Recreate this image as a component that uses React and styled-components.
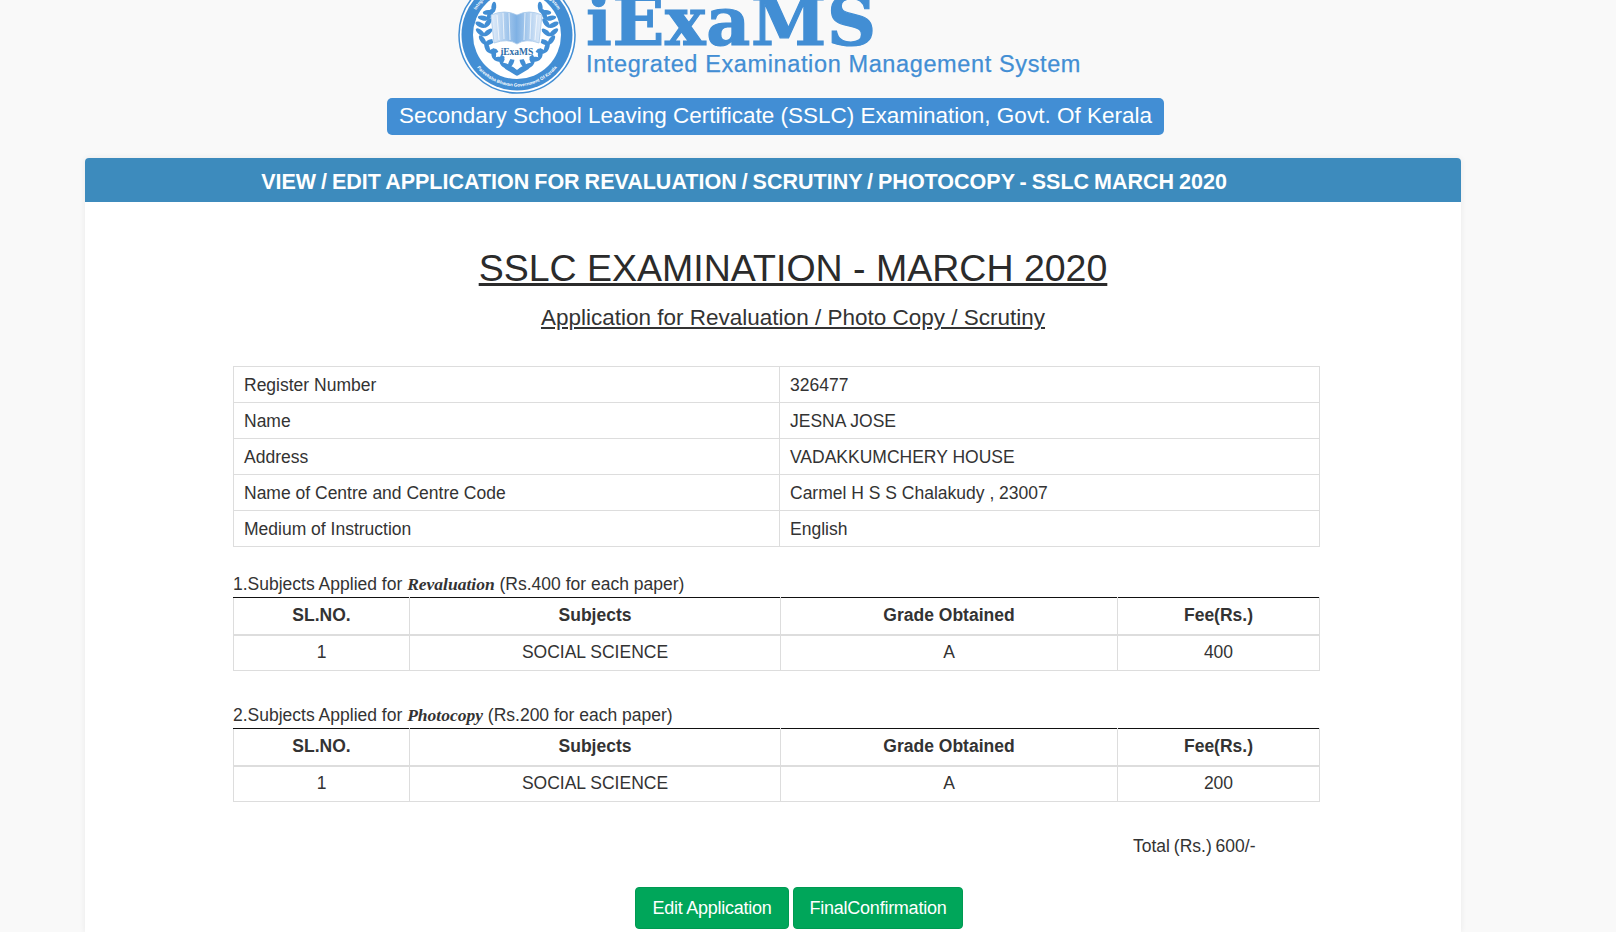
import React from "react";
import styled, { createGlobalStyle } from "styled-components";

const Global = createGlobalStyle`
  html, body { margin: 0; padding: 0; height: 932px; overflow: hidden; background: #f9f9f9; }
  body { font-family: "Liberation Sans", Arial, sans-serif; color: #333; font-size: 17.5px; }
  * { box-sizing: border-box; }
`;
const Page = styled.div`display: flex; flex-direction: column; height: 932px; overflow: hidden;`;
const Masthead = styled.header`display: flex; height: 94px; padding-left: 458px; gap: 10px; overflow: hidden; align-items: flex-end;`;
const LogoMark = styled.svg`width: 118px; height: 118px; flex: none; display: block;`;
const Brand = styled.div`display: flex; flex-direction: column; color: #428ed4;`;
const BrandName = styled.div`font-family: "DejaVu Serif", serif; font-weight: 700; font-size: 68px; line-height: 60px; height: 60px; margin-top: -13px; letter-spacing: .7px; -webkit-text-stroke: 1.2px #428ed4; white-space: nowrap;`;
const BrandSub = styled.div`font-size: 23.5px; line-height: 26px; letter-spacing: .62px; margin: 0 0 17px; -webkit-text-stroke: .25px #428ed4; white-space: nowrap;`;
const BadgeRow = styled.div`display: flex; padding: 4px 0 0 387px;`;
const Badge = styled.div`width: 777px; height: 37px; background: #428ed4; color: #fff; border-radius: 5px; font-size: 22.5px; line-height: 35px; text-align: center; white-space: nowrap;`;
const Card = styled.section`margin: 23px 155px 0 85px; background: #fff; flex: 1; border-radius: 4px 4px 0 0; box-shadow: 0 0 6px rgba(0,0,0,.07);`;
const CardHead = styled.div`height: 44px; background: #3d8bbd; border-radius: 4px 4px 0 0; color: #fff; font-weight: 700; font-size: 21.5px; line-height: 48px; word-spacing: -1px; text-align: center; padding-right: 58px; white-space: nowrap;`;
const CardBody = styled.div`padding: 0 142px 0 148px;`;
const Title = styled.h1`margin: 43px 0 0; font-weight: 400; font-size: 37.5px; line-height: 46px; text-align: center; text-decoration: underline; padding-left: 34px; color: #2b2b2b;`;
const Subtitle = styled.h2`margin: 13px 0 0; font-weight: 400; font-size: 22.5px; line-height: 28px; text-align: center; text-decoration: underline; padding-left: 34px; color: #333;`;
const Grid = styled.table`width: 1086px; border-collapse: collapse; table-layout: fixed; margin-top: ${p => p.$mt || 0}px; border-top: ${p => p.$rule ? "1px solid #111" : "0"};`;
const Cell = styled.td`border: 1px solid #ddd; height: 36px; padding: 0 10px; font-size: 17.5px; line-height: 24px; color: #333; text-align: left;`;
const DataCell = styled(Cell)`text-align: center; padding-bottom: 2px;`;
const Head = styled.th`border: 1px solid #ddd; border-top: 1px solid #111; border-bottom-width: 2px; height: 37px; padding: 0 10px; font-size: 17.5px; color: #333; text-align: center; font-weight: 700;`;
const Caption = styled.div`font-size: 17.5px; line-height: 24px; margin-top: ${p => p.$mt}px; height: 25px; color: #333;`;
const Accent = styled.em`font-family: "Liberation Serif", serif; font-weight: 700; font-style: italic; font-size: 17.5px;`;
const Total = styled.div`margin: 32px 0 0 900px; line-height: 24px; word-spacing: -1px;`;
const Actions = styled.div`display: flex; gap: 4px; margin: 29px 0 0 402px;`;
const Btn = styled.button`height: 42px; width: ${p => p.$w}px; background: #00a65a; color: #fff; border: 1px solid #009a52; border-radius: 4px; font: 18px "Liberation Sans", sans-serif; letter-spacing: -.25px; padding: 0;`;

const steps = Array.from({ length: 9 });
const Branch = ({ side }) => (
  <g>
    {steps.map((_, i) => {
      const deg = 14 + i * 15;
      const a = deg * Math.PI / 180;
      const r = 33;
      const x = 59 + side * r * Math.sin(a), y = 59 + r * Math.cos(a);
      const tilt = side * (90 - deg);
      return (
        <g key={i} transform={`translate(${x} ${y})`}>
          <ellipse cx={side * 5} cy="0" rx="5.5" ry="2.4" fill="#428ed4" transform={`rotate(${-tilt - side * 40})`} />
          <ellipse cx={-side * 5} cy="0" rx="5.5" ry="2.4" fill="#428ed4" transform={`rotate(${-tilt + side * 40})`} />
        </g>
      );
    })}
  </g>
);
const Logo = () => (
  <LogoMark viewBox="0 0 118 118">
    <defs>
      <linearGradient id="bk" x1="0" x2="1">
        <stop offset="0" stopColor="#e4eefa" /><stop offset=".5" stopColor="#7fb1e4" /><stop offset="1" stopColor="#e4eefa" />
      </linearGradient>
      <path id="ringBottom" d="M7.5 59 A51.5 51.5 0 0 0 110.5 59" />
      <path id="ringTop" d="M11 59 A48 48 0 0 1 107 59" />
    </defs>
    <circle cx="59" cy="59" r="58" fill="#fff" stroke="#428ed4" strokeWidth="1.5" />
    <circle cx="59" cy="59" r="55.5" fill="#428ed4" />
    <circle cx="59" cy="59" r="44" fill="#fff" />
    <text fontFamily="Liberation Sans, sans-serif" fontSize="4.6" fontWeight="700" fill="#fff">
      <textPath href="#ringBottom" startOffset="50%" textAnchor="middle">Pareeksha Bhavan Government Of Kerala</textPath>
    </text>
    <text fontFamily="Liberation Sans, sans-serif" fontSize="4.6" fontWeight="700" fill="#fff">
      <textPath href="#ringTop" startOffset="50%" textAnchor="middle">Integrated Examination Management System</textPath>
    </text>
    <Branch side={-1} />
    <Branch side={1} />
    <path d="M59 97 L49 91 M59 97 L69 91" stroke="#428ed4" strokeWidth="5" strokeLinecap="round" />
    <circle cx="59" cy="59" r="25" fill="#fff" />
    <path d="M33 39 Q47 33 59 39 Q71 33 84 39 L81 67 Q68 62 59 68 Q50 62 36 67 Z" fill="url(#bk)" stroke="#a8c9ea" strokeWidth=".8" />
    <path d="M39 39 L41 64 M45 37 L46 63 M51 37 L52 64 M67 37 L66 64 M73 37 L72 63 M79 39 L77 64" stroke="#fff" strokeWidth=".7" fill="none" />
    <text x="59" y="79" fontFamily="Liberation Serif, serif" fontSize="9.5" fill="#2f6ea8" fontWeight="700" textAnchor="middle">iExaMS</text>
  </LogoMark>
);

const Subjects = ({ fee }) => (
  <Grid $rule>
    <colgroup><col width="176" /><col width="371" /><col width="337" /><col width="202" /></colgroup>
    <thead><tr><Head>SL.NO.</Head><Head>Subjects</Head><Head>Grade Obtained</Head><Head>Fee(Rs.)</Head></tr></thead>
    <tbody><tr><DataCell>1</DataCell><DataCell>SOCIAL SCIENCE</DataCell><DataCell>A</DataCell><DataCell>{fee}</DataCell></tr></tbody>
  </Grid>
);

const info = [
  ["Register Number", "326477"], ["Name", "JESNA JOSE"], ["Address", "VADAKKUMCHERY HOUSE"],
  ["Name of Centre and Centre Code", "Carmel H S S Chalakudy , 23007"], ["Medium of Instruction", "English"],
];

export default function App() {
  return (
    <Page>
      <Global />
      <Masthead>
        <Logo />
        <Brand>
          <BrandName>iExaMS</BrandName>
          <BrandSub>Integrated Examination Management System</BrandSub>
        </Brand>
      </Masthead>
      <BadgeRow><Badge>Secondary School Leaving Certificate (SSLC) Examination, Govt. Of Kerala</Badge></BadgeRow>
      <Card>
        <CardHead>VIEW / EDIT APPLICATION FOR REVALUATION / SCRUTINY / PHOTOCOPY - SSLC MARCH 2020</CardHead>
        <CardBody>
          <Title>SSLC EXAMINATION - MARCH 2020</Title>
          <Subtitle>Application for Revaluation / Photo Copy / Scrutiny</Subtitle>
          <Grid $mt={34}>
            <colgroup><col width="546" /><col width="540" /></colgroup>
            <tbody>{info.map(([k, v]) => <tr key={k}><Cell>{k}</Cell><Cell>{v}</Cell></tr>)}</tbody>
          </Grid>
          <Caption $mt={25}>1.Subjects Applied for <Accent>Revaluation</Accent> (Rs.400 for each paper)</Caption>
          <Subjects fee="400" />
          <Caption $mt={32}>2.Subjects Applied for <Accent>Photocopy</Accent> (Rs.200 for each paper)</Caption>
          <Subjects fee="200" />
          <Total>Total (Rs.) 600/-</Total>
          <Actions><Btn $w={154}>Edit Application</Btn><Btn $w={170}>FinalConfirmation</Btn></Actions>
        </CardBody>
      </Card>
    </Page>
  );
}
